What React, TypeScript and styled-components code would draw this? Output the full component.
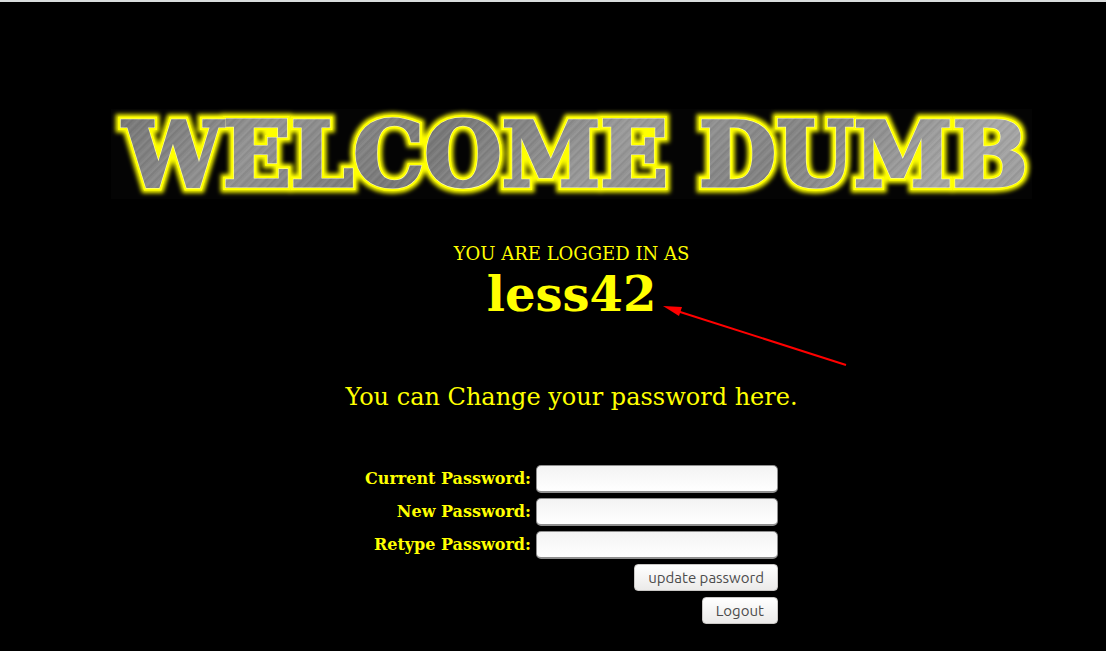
import React from "react";
import styled, { createGlobalStyle } from "styled-components";

const GlobalStyle = createGlobalStyle`
  * { box-sizing: border-box; }
  body {
    margin: 0;
    background: #000;
    color: #ff0;
    font-family: "DejaVu Serif", serif;
  }
`;

const Page = styled.main`
  display: flex;
  flex-direction: column;
  align-items: center;
  border-top: 2px solid #d9dcdc;
  padding: 107px 0 24px 37px;
`;

const BannerHeading = styled.h1`
  width: 100%;
  max-width: 921px;
  margin: 0;
  font-size: 16px;
  background: #040404;
`;

const BannerArt = styled.svg`
  display: block;
  width: 100%;
  height: auto;
  overflow: visible;
`;

const BannerText = styled.text`
  font-family: "DejaVu Serif", serif;
  font-size: 89px;
  font-weight: 700;
  stroke-linejoin: miter;
`;

const Status = styled.p`
  margin: 44px 0 0;
  font-size: 18px;
  line-height: 22px;
`;

const UserName = styled.strong`
  position: relative;
  font-size: 48px;
  line-height: 58px;
`;

const Arrow = styled.svg`
  position: absolute;
  left: calc(100% + 7px);
  top: 40px;
  width: 184px;
  height: 64px;
`;

const Intro = styled.p`
  margin: 60px 0 0;
  font-size: 24px;
  line-height: 28px;
`;

const Form = styled.form`
  display: grid;
  grid-template-columns: auto 242px;
  grid-auto-rows: 28px;
  align-items: start;
  gap: 5px;
  margin-top: 54px;
`;

const Label = styled.label`
  font-size: 16px;
  line-height: 28px;
  font-weight: 700;
  text-align: right;
`;

const Field = styled.input`
  width: 100%;
  height: 28px;
  padding: 4px 8px;
  border: 1px solid #8f8f8f;
  border-bottom-width: 2px;
  border-radius: 5px;
  background: linear-gradient(#f3f3f3, #fff);
  font-size: 15px;
`;

const Button = styled.button`
  grid-column: 2;
  justify-self: end;
  height: 27px;
  padding: 0 13px;
  border: 1px solid #c9c7c5;
  border-radius: 4px;
  background: linear-gradient(#fff, #ebeae9);
  color: #4c4c4c;
  font-family: Ubuntu, "Noto Sans", sans-serif;
  font-size: 15px;
  line-height: 20px;
`;

const fields = [
  { id: "current_password", label: "Current Password:" },
  { id: "password", label: "New Password:" },
  { id: "re_password", label: "Retype Password:" },
];

function Banner() {
  const at = { x: 12, y: 77 };
  return (
    <BannerHeading>
      <BannerArt viewBox="0 0 921 90">
        <defs>
          <linearGradient id="steel" gradientUnits="userSpaceOnUse" x1="0" y1="0" x2="90" y2="90" spreadMethod="reflect">
            <stop offset="0" stopColor="#7c7c7c" />
            <stop offset="0.5" stopColor="#8b8b8b" />
            <stop offset="1" stopColor="#9c9c9c" />
          </linearGradient>
          <linearGradient id="shine" x1="0" y1="0" x2="1" y2="0">
            <stop offset="0" stopColor="#000" stopOpacity="0.06" />
            <stop offset="1" stopColor="#fff" stopOpacity="0.14" />
          </linearGradient>
          <pattern id="brush" patternUnits="userSpaceOnUse" width="13" height="90" patternTransform="rotate(45)">
            <path d="M1 0V90M8 0V90" stroke="#fff" strokeOpacity="0.14" strokeWidth="0.7" />
            <path d="M4 0V90M10 0V90" stroke="#000" strokeOpacity="0.14" strokeWidth="0.7" />
          </pattern>
          <pattern id="metal" patternUnits="userSpaceOnUse" width="921" height="90">
            <rect width="921" height="90" fill="url(#steel)" />
            <rect width="921" height="90" fill="url(#shine)" />
            <rect width="921" height="90" fill="url(#brush)" />
          </pattern>
          <filter id="glow" x="-5%" y="-30%" width="110%" height="160%">
            <feGaussianBlur stdDeviation="2" />
          </filter>
        </defs>
        <BannerText {...at} fill="#ff0" stroke="#ff0" strokeWidth="13" filter="url(#glow)" aria-hidden="true">WELCOME DUMB</BannerText>
        <BannerText {...at} fill="#ff0" stroke="#ff0" strokeWidth="8" aria-hidden="true">WELCOME DUMB</BannerText>
        <BannerText {...at} fill="#ffffb0" stroke="#ffffb0" strokeWidth="4" aria-hidden="true">WELCOME DUMB</BannerText>
        <BannerText {...at} fill="url(#metal)" stroke="url(#metal)" strokeWidth="3">WELCOME DUMB</BannerText>
      </BannerArt>
    </BannerHeading>
  );
}

export default function App() {
  return (
    <>
      <GlobalStyle />
      <Page>
        <Banner />
        <Status>YOU ARE LOGGED IN AS</Status>
        <UserName>
          less42
          <Arrow viewBox="0 0 184 64" aria-hidden="true">
            <path d="M14 6L183 60" stroke="#f00" strokeWidth="2" />
            <path d="M0 1L19 2L16 11Z" fill="#f00" />
          </Arrow>
        </UserName>
        <Intro>You can Change your password here.</Intro>
        <Form onSubmit={(e) => e.preventDefault()}>
          {fields.map((f) => (
            <React.Fragment key={f.id}>
              <Label htmlFor={f.id}>{f.label}</Label>
              <Field id={f.id} name={f.id} type="password" />
            </React.Fragment>
          ))}
          <Button type="submit">update password</Button>
          <Button type="button">Logout</Button>
        </Form>
      </Page>
    </>
  );
}
